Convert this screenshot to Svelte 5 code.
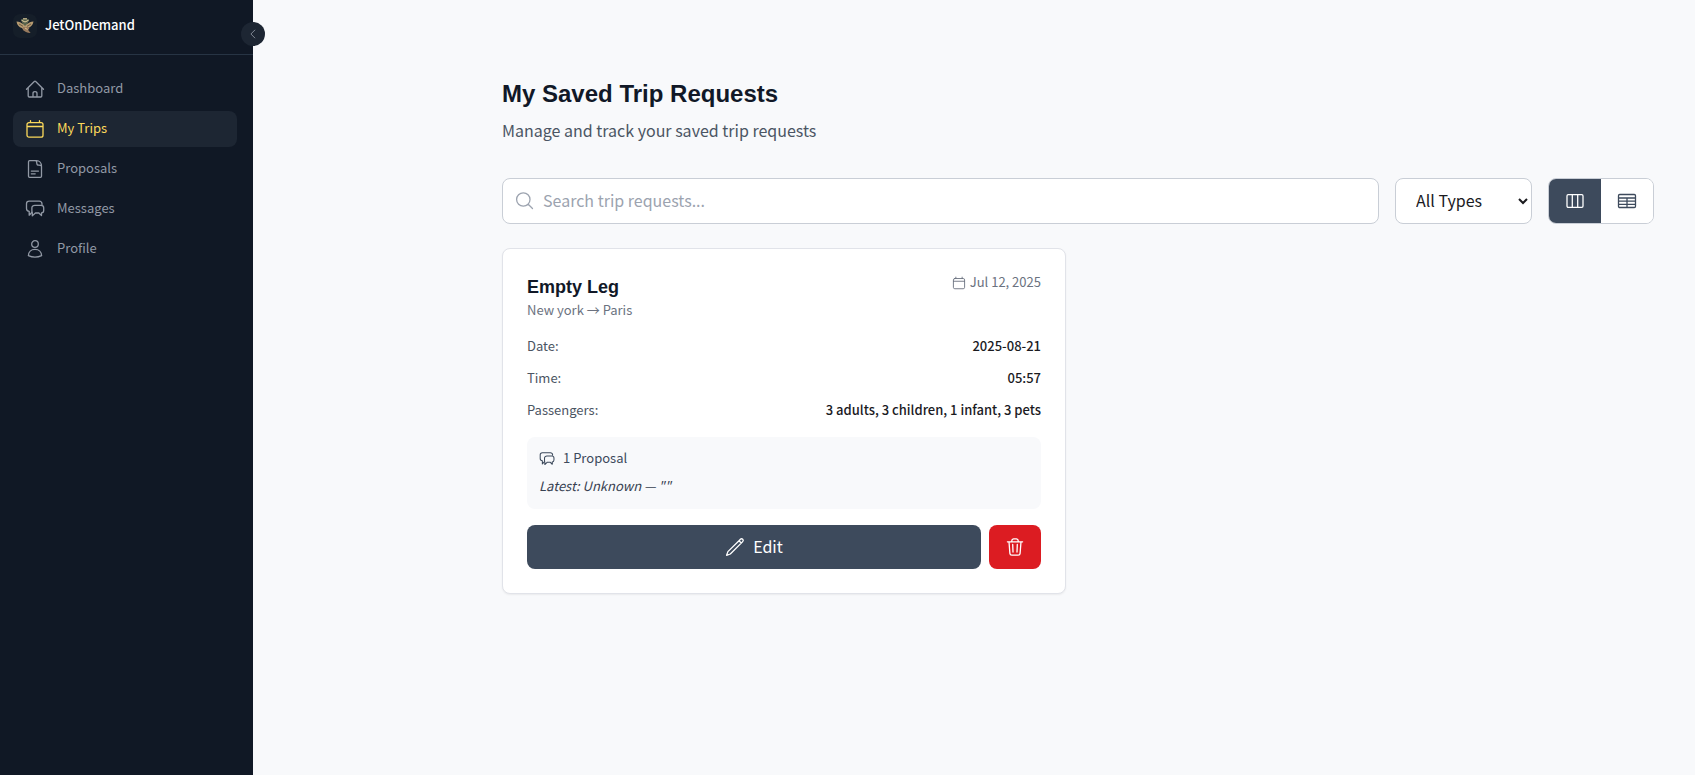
<script>
  const navItems = [
    { label: "Dashboard", icon: "home" },
    { label: "My Trips", icon: "calendar" },
    { label: "Proposals", icon: "document" },
    { label: "Messages", icon: "chat" },
    { label: "Profile", icon: "user" },
  ];

  const trips = [
    {
      title: "Empty Leg",
      route: "New york → Paris",
      created: "Jul 12, 2025",
      details: [
        { label: "Date:", value: "2025-08-21" },
        { label: "Time:", value: "05:57" },
        { label: "Passengers:", value: "3 adults, 3 children, 1 infant, 3 pets" },
      ],
      proposals: "1 Proposal",
      latest: 'Latest: Unknown — ""',
    },
  ];

  let active = $state("My Trips");
  let search = $state("");
  let type = $state("all");
  let view = $state("grid");
</script>

{#snippet icon(name, size = 20)}
  <svg class="icon" width={size} height={size} viewBox="0 0 20 20" aria-hidden="true">
    {#if name === "home"}
      <path d="M1.5 10.3 9.3 2.5a1 1 0 0 1 1.4 0l7.8 7.8M3.2 8.8v8.1c0 .6.5 1.1 1.1 1.1h11.4c.6 0 1.1-.5 1.1-1.1V8.8M8 18v-3.6c0-1 .8-1.7 2-1.7s2 .7 2 1.7V18" />
    {:else if name === "calendar"}
      <path d="M4 3.6h12a2 2 0 0 1 2 2v10.600a2 2 0 0 1-2 2H4a2 2 0 0 1-2-2V5.600a2 2 0 0 1 2-2ZM2 7.500h16M5.500 1.600v2M14.500 1.600v2" />
    {:else if name === "document"}
      <path d="M11.5 1.7H4.6c-.6 0-1.1.5-1.1 1.1v14.4c0 .6.5 1.1 1.1 1.1h10.8c.6 0 1.1-.5 1.1-1.1V7.3c0-3.2-2.2-5.6-5-5.6ZM10.8 1.7c.8.4 1 1.2 1 2.6 0 1.3.6 1.9 2 1.9 1.4 0 2.3.3 2.7 1.1M6.3 12.1h7.2M6.3 14.8h3.9" />
    {:else if name === "chat"}
      <path d="M17 5.4V4.8c0-1.500-1.200-2.600-2.700-2.600H4.200c-1.500 0-2.700 1.100-2.700 2.600v4.700c0 1.600 1.200 2.700 2.700 2.800V16.200l2.800-3" />
      <path d="M9.800 6.300h6.300c1.500 0 2.600 1.100 2.600 2.500v2.600c0 1.400-.9 2.400-2.200 2.500v2.700l-2.600-2.600h-3.500l-3.100 2.900V14c-.4-.5-.4-1.200-.4-2.300V8.800c0-1.400 1.400-2.500 2.900-2.500Z" />
    {:else if name === "user"}
      <circle cx="10" cy="5" r="3.3" />
      <path d="M3.400 16.700c0-3.700 2.700-6.300 6.600-6.300s6.600 2.600 6.600 6.300c-1.900.9-4.100 1.500-6.600 1.500s-4.700-.6-6.600-1.500Z" />
    {:else if name === "search"}
      <path d="m17.500 17.500-4.300-4.300M15 8.500a6.700 6.700 0 1 1-13.400 0 6.700 6.700 0 0 1 13.400 0Z" />
    {:else if name === "columns"}
      <path d="M3.200 3.700h13.600c.7 0 1.200.5 1.200 1.200v10.200c0 .7-.5 1.200-1.200 1.200H3.200c-.7 0-1.200-.5-1.200-1.200V4.900c0-.7.5-1.200 1.200-1.200ZM7.300 3.700v12.600M12.700 3.700v12.600" />
    {:else if name === "table"}
      <path d="M2.700 3.500h14.600c.6 0 1.200.5 1.200 1.200v10.600c0 .7-.6 1.200-1.200 1.200H2.700c-.6 0-1.200-.5-1.200-1.200V4.700c0-.7.6-1.200 1.200-1.200ZM1.500 7h17M1.500 10.200h17M1.500 13.400h17M10 7v9.500" />
    {:else if name === "pencil"}
      <path d="m14 3.700 1.400-1.400a1.600 1.600 0 0 1 2.300 2.300L5.300 17l-3.700 1.300L2.900 14.600 14 3.700ZM14 3.700 16.300 6" />
    {:else if name === "trash"}
      <path d="m12.300 7.500-.3 7.500M8 15l-.3-7.500M2.400 4.800h15.200M16 4.800l-.9 11.600a1.900 1.900 0 0 1-1.900 1.800H6.800a1.900 1.900 0 0 1-1.900-1.800L4 4.800M6.800 4.600v-.8c0-1 .8-1.800 1.800-1.900h2.800c1 .1 1.800.9 1.800 1.900v.8" />
    {:else if name === "chevron"}
      <path d="m13 3.500-6.500 6.500 6.500 6.500" />
    {/if}
  </svg>
{/snippet}

<div class="layout">
  <aside class="sidebar">
    <div class="brand">
      <svg class="logo" width="24" height="24" viewBox="0 0 24 24" aria-hidden="true">
        <rect width="24" height="24" rx="7" fill="#151e29" />
        <path d="M3.5 7.5c3 .2 4.500 1 6 2.200h5c1.500-1.200 3-2 6-2.200-.6 3.500-2.700 5.700-6 6.500l-2 2h-2L9 14c-3-.7-5-3-5.500-6.500Z" fill="#b59a70" />
        <path d="M8 6c1-2 7-2 8.200 0l-1.400 3.300L12 12 9.300 9.300Z" fill="#59634d" />
        <path d="M8.600 6.300 12 8l3.500-1.700M10 4.800h4" fill="none" stroke="#e1cda0" />
        <path d="M6 10l4 2.300M18 10l-4 2.300" fill="none" stroke="#6d5b45" />
        <path d="M10 13h5.200c1.600 0 1.200 2.300-.2 2.800l2.600 3.200c-3.700 0-6-1.500-7.700-3Z" fill="#987a5e" />
        <path d="m12 14 2.500 1.500" stroke="#d8bd8b" />
      </svg>
      <span>JetOnDemand</span>
      <button class="collapse" aria-label="Collapse sidebar">{@render icon("chevron", 12)}</button>
    </div>
    <nav>
      {#each navItems as item}
        <a
          href="#{item.icon}"
          class="nav-item"
          class:active={active === item.label}
          onclick={() => (active = item.label)}
        >
          {@render icon(item.icon)}
          <span>{item.label}</span>
        </a>
      {/each}
    </nav>
  </aside>

  <main>
    <header>
      <h1>My Saved Trip Requests</h1>
      <p>Manage and track your saved trip requests</p>
    </header>

    <div class="toolbar">
      <label class="search">
        {@render icon("search")}
        <input type="text" placeholder="Search trip requests..." aria-label="Search trip requests" bind:value={search} />
      </label>
      <select aria-label="Trip type" bind:value={type}>
        <option value="all">All Types</option>
        <option value="leg">Empty Leg</option>
      </select>
      <div class="view-toggle">
        <button class:selected={view === "grid"} aria-label="Grid view" onclick={() => (view = "grid")}>
          {@render icon("columns")}
        </button>
        <button class:selected={view === "table"} aria-label="Table view" onclick={() => (view = "table")}>
          {@render icon("table")}
        </button>
      </div>
    </div>

    <div class="trips">
      {#each trips as trip}
        <article class="card">
          <div class="card-header">
            <div>
              <h2>{trip.title}</h2>
              <p class="route">{trip.route}</p>
            </div>
            <div class="created">
              {@render icon("calendar", 14)}
              <span>{trip.created}</span>
            </div>
          </div>

          <dl>
            {#each trip.details as detail}
              <div class="detail">
                <dt>{detail.label}</dt>
                <dd>{detail.value}</dd>
              </div>
            {/each}
          </dl>

          <div class="proposals">
            <div class="count">
              {@render icon("chat", 16)}
              <span>{trip.proposals}</span>
            </div>
            <p>{trip.latest}</p>
          </div>

          <div class="actions">
            <button class="edit">{@render icon("pencil")}<span>Edit</span></button>
            <button class="delete" aria-label="Delete trip">{@render icon("trash")}</button>
          </div>
        </article>
      {/each}
    </div>
  </main>
</div>

<style>
  :global(body) {
    margin: 0;
    background: #f8f9fb;
  }

  .layout,
  .layout * {
    box-sizing: border-box;
  }

  .layout {
    display: flex;
    min-height: 100vh;
    font-family: "Noto Sans CJK SC", sans-serif;
    font-size: 13px;
    line-height: 20px;
    color: #1b1b1f;
  }

  h1,
  h2,
  p,
  dl,
  dd {
    margin: 0;
  }

  button,
  input,
  select {
    margin: 0;
    font: inherit;
  }

  button {
    display: flex;
    align-items: center;
    justify-content: center;
    border: 0;
    cursor: pointer;
  }

  .icon {
    display: block;
    flex-shrink: 0;
    fill: none;
    stroke: currentColor;
    stroke-width: 1.3;
    stroke-linecap: round;
    stroke-linejoin: round;
  }

  .sidebar {
    flex: 0 0 253px;
    background: #101825;
  }

  .brand {
    position: relative;
    display: flex;
    align-items: center;
    gap: 8px;
    padding: 14px 13px 16px;
    border-bottom: 1px solid #273444;
    color: #fff;
    font-weight: 500;
  }

  .brand span,
  .nav-item span {
    padding-bottom: 2px;
    line-height: 18px;
  }

  .collapse {
    position: absolute;
    top: 22px;
    right: -12px;
    width: 24px;
    height: 24px;
    padding: 0;
    border-radius: 50%;
    background: #1d2633;
    color: #9ca3af;
  }

  nav {
    display: flex;
    flex-direction: column;
    gap: 4px;
    padding: 16px 16px 16px 13px;
  }

  .nav-item {
    display: flex;
    align-items: center;
    gap: 12px;
    padding: 8px 12px;
    border-radius: 8px;
    color: #9299a5;
    text-decoration: none;
  }

  .nav-item.active {
    background: #1d2633;
    color: #fcd95b;
  }

  main {
    flex: 1;
    min-width: 0;
    padding: 78px 41px 40px 249px;
  }

  h1,
  h2 {
    font-family: "Liberation Sans", Arial, sans-serif;
    font-weight: 700;
    color: #111827;
  }

  h1 {
    font-size: 24px;
    line-height: 32px;
  }

  header p {
    margin-top: 8px;
    font-size: 16px;
    line-height: 24px;
    color: #4b5563;
  }

  .toolbar {
    display: flex;
    gap: 16px;
    margin: 36px 0 24px;
    font-size: 16px;
    line-height: 24px;
  }

  .search {
    display: flex;
    flex: 1;
    align-items: center;
    gap: 8px;
    height: 46px;
    padding: 0 12px;
    border: 1px solid #c9ced6;
    border-radius: 8px;
    background: #fff;
    color: #9ca3af;
  }

  .search input {
    flex: 1;
    min-width: 0;
    padding: 0 0 2px;
    border: 0;
    outline: 0;
    background: transparent;
    color: #1b1b1f;
  }

  .search input::placeholder {
    color: #9ca3af;
    opacity: 1;
  }

  select {
    width: 137px;
    padding: 0 0 2px 16px;
    border: 1px solid #c9ced6;
    border-radius: 8px;
    background: #fff;
    color: #1b1b1f;
  }

  .view-toggle {
    display: flex;
    overflow: hidden;
    border: 1px solid #c9ced6;
    border-radius: 8px;
    background: #fff;
  }

  .view-toggle button {
    padding: 12px 16px;
    background: #fff;
    color: #3d4a5c;
  }

  .view-toggle .selected {
    background: #3d4a5c;
    color: #fff;
  }

  .trips {
    display: grid;
    grid-template-columns: repeat(2, 1fr);
    gap: 24px;
  }

  .card {
    padding: 24px;
    border: 1px solid #e1e3e9;
    border-radius: 8px;
    background: #fff;
    box-shadow: 0 1px 2px rgba(0, 0, 0, 0.06);
  }

  .card-header {
    display: flex;
    align-items: flex-start;
    justify-content: space-between;
  }

  h2 {
    font-size: 18px;
    line-height: 28px;
  }

  .route,
  .created {
    color: #6b7280;
  }

  .created {
    display: flex;
    align-items: center;
    gap: 4px;
  }

  .route,
  .created span,
  .detail,
  .count span,
  .proposals p {
    padding-bottom: 2px;
    line-height: 18px;
  }

  dl {
    display: flex;
    flex-direction: column;
    gap: 12px;
    margin: 16px 0;
  }

  .detail {
    display: flex;
    justify-content: space-between;
  }

  dt {
    color: #4b5563;
  }

  dd {
    font-weight: 500;
  }

  .proposals {
    display: flex;
    flex-direction: column;
    gap: 8px;
    padding: 12px;
    border-radius: 8px;
    background: #f8f9fb;
    color: #3d4a5c;
  }

  .count {
    display: flex;
    align-items: center;
    gap: 8px;
  }

  .proposals p {
    font-style: italic;
    color: #374151;
  }

  .actions {
    display: flex;
    gap: 8px;
    margin-top: 16px;
    font-size: 16px;
    line-height: 24px;
  }

  .actions button {
    padding: 10px 16px;
    border-radius: 8px;
    color: #fff;
  }

  .edit {
    flex: 1;
    gap: 8px;
    background: #3d4a5c;
  }

  .edit span {
    padding-bottom: 2px;
    line-height: 22px;
  }

  .actions .delete {
    background: #dc1c22;
  }
</style>
